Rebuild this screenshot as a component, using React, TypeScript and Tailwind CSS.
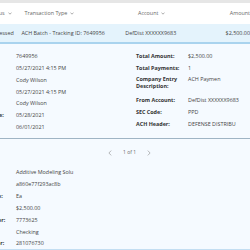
import React from "react";

const Sort = () => (
  <svg width="4" height="3" viewBox="0 0 4 3" className="ml-[3px] shrink-0">
    <polyline points="0.5,0.6 2,2.2 3.5,0.6" fill="none" stroke="#8a8a8a" strokeWidth="0.7" />
  </svg>
);

const leftTop: [string, string][] = [
  ["Tracking ID:", "7649956"],
  ["Created On:", "05/27/2021 4:15 PM"],
  ["Created By:", "Cody Wilson"],
  ["Modified On:", "05/27/2021 4:15 PM"],
  ["Modified By:", "Cody Wilson"],
  ["Settlement Date:", "05/28/2021"],
  ["Process Date:", "06/01/2021"],
];

const rightTop: [string, string][] = [
  ["Total Amount:", "$2,500.00"],
  ["Total Payments:", "1"],
  ["Company Entry Description:", "ACH Paymen"],
  ["From Account:", "DefDist XXXXXX9683"],
  ["SEC Code:", "PPD"],
  ["ACH Header:", "DEFENSE DISTRIBU"],
];

const lower: [string, string][] = [
  ["Receiver:", "Additive Modeling Solu"],
  ["Individual ID:", "a860e77f293ac8b"],
  ["Unit of Measure:", "Ea"],
  ["Amount:", "$2,500.00"],
  ["Account Number:", "7773625"],
  ["Account Type:", "Checking"],
  ["Routing Number:", "281076730"],
];

export default function App() {
  return (
    <div
      className="w-[250px] h-[250px] overflow-hidden bg-white text-[5.4px] text-[#444]"
      style={{ fontFamily: '"Open Sans", "Liberation Sans", sans-serif' }}
    >
      <div className="h-[3px] bg-[#e6e6e6]" />
      {/* header */}
      <div className="flex h-[21px] items-center bg-white text-[#666] whitespace-nowrap ml-[-11px]">
        <div className="w-[36px] flex items-center">Status<Sort /></div>
        <div className="w-[115px] flex items-center">Transaction Type<Sort /></div>
        <div className="w-[93px] flex items-center">Account<Sort /></div>
        <div className="flex items-center">Amount</div>
      </div>
      {/* selected row */}
      <div className="flex h-[20px] items-center bg-[#e4f3fc] border-b-[2px] border-[#a9d3ee] whitespace-nowrap ml-[-12px] text-[#444]">
        <div className="w-[37px]">Processed</div>
        <div className="w-[115px]">ACH Batch - Tracking ID: 7649956</div>
        <div className="w-[111px]">DefDist XXXXXX9683</div>
        <div>$2,500.00</div>
      </div>
      {/* detail */}
      <div className="bg-[#f5faff] pt-[6px]">
        <div className="flex whitespace-nowrap">
          <div className="ml-[-42px] w-[172px] shrink-0">
            {leftTop.map(([l, v], i) => (
              <div key={i} className="flex h-[11.9px] items-center">
                <div className="w-[58px] shrink-0 font-bold text-[#333]">{l}</div>
                <div>{v}</div>
              </div>
            ))}
          </div>
          <div className="ml-[6px] w-[110px] shrink-0">
            {rightTop.map(([l, v], i) =>
              i === 2 ? (
                <div key={i} className="flex items-start pt-[2.7px] pb-[5.3px]">
                  <div className="w-[52px] shrink-0 font-bold text-[#333] whitespace-normal leading-[6.3px]">{l}</div>
                  <div className="leading-[6.3px]">{v}</div>
                </div>
              ) : (
                <div key={i} className="flex h-[11.8px] items-center">
                  <div className="w-[52px] shrink-0 font-bold text-[#333]">{l}</div>
                  <div>{v}</div>
                </div>
              )
            )}
          </div>
        </div>
        <div className="mt-[5px] h-[1px] bg-[#9fb4c4]" />
        <div className="flex h-[27px] items-center justify-center gap-[11px] pl-[9px] text-[#666]">
          <svg width="4" height="6" viewBox="0 0 4 6">
            <polyline points="3.2,0.6 0.9,3 3.2,5.4" fill="none" stroke="#8a8a8a" strokeWidth="0.6" />
          </svg>
          <span className="text-[5px]">1 of 1</span>
          <svg width="4" height="6" viewBox="0 0 4 6">
            <polyline points="0.8,0.6 3.1,3 0.8,5.4" fill="none" stroke="#8a8a8a" strokeWidth="0.6" />
          </svg>
        </div>
        <div className="ml-[-42px] whitespace-nowrap">
          {lower.map(([l, v], i) => (
            <div key={i} className="flex h-[11.9px] items-center">
              <div className="w-[58px] shrink-0 font-bold text-[#333]">{l}</div>
              <div>{v}</div>
            </div>
          ))}
        </div>
        <div className="h-[2px] bg-[#c3def2]" />
        <div className="h-[10px] bg-[#f7fbfe]" />
      </div>
    </div>
  );
}
